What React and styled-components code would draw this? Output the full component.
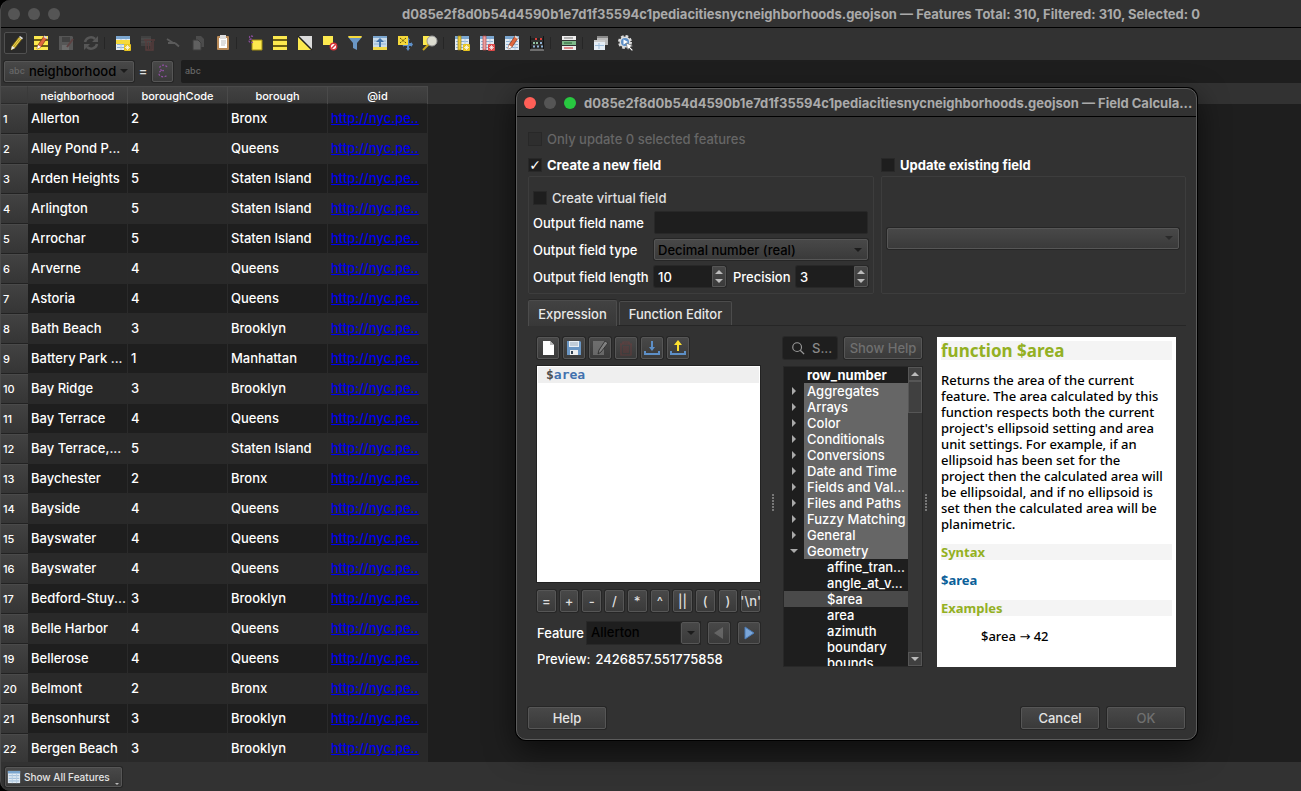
import React, { useState } from 'react'
import styled, { createGlobalStyle, css } from 'styled-components'

const UI_FONT = "Inter, 'Liberation Sans', sans-serif"
const HELP_FONT = "'Noto Sans', 'DejaVu Sans', sans-serif"
const MONO_FONT = "'DejaVu Sans Mono', 'Liberation Mono', monospace"

const GlobalStyle = createGlobalStyle`
    * {
        box-sizing: border-box;
    }
    body {
        margin: 0;
        background: #000;
        color: #fff;
        font: 500 13px/16px ${UI_FONT};
        overflow: hidden;
    }
    button,
    input,
    select {
        font: inherit;
        color: inherit;
        margin: 0;
    }
    svg {
        flex: none;
    }
`

const raised = css`
    border: 1px solid #565656;
    border-radius: 2px;
    background: linear-gradient(#484848, #3a3a3a);
    box-shadow: 0 0 0 1px #262626;
`

const Window = styled.div`
    height: 100vh;
    display: flex;
    flex-direction: column;
    background: #323232;
    border-left: 1px solid #4a4a4a;
    border-radius: 10px 0 0 10px;
    overflow: hidden;
`

const TitleBar = styled.header`
    display: flex;
    align-items: center;
    flex: none;
    height: 28px;
    padding: 0 ${(props) => (props.$dialog ? 8 : 101)}px 0 7px;
    border-bottom: 1px solid #000;
`

const Lights = styled.div`
    display: flex;
    gap: 8px;
`

const Light = styled.span`
    width: 12px;
    height: 12px;
    border-radius: 50%;
    background: ${(props) => props.color};
`

const Title = styled.h1`
    flex: 1;
    margin: 0 0 0 8px;
    font-size: 13px;
    font-weight: 700;
    line-height: 16px;
    color: #aaa;
    text-align: ${(props) => (props.$dialog ? 'left' : 'right')};
    white-space: nowrap;
`

const Toolbar = styled.div`
    display: flex;
    align-items: center;
    gap: 2px;
    flex: none;
    height: 29px;
    padding: 0 3px;
`

const ToolButton = styled.button`
    display: flex;
    align-items: center;
    justify-content: center;
    width: 23px;
    height: 22px;
    padding: 0;
    border: 1px solid ${(props) => (props.$pressed ? '#505050' : 'transparent')};
    border-radius: 2px;
    background: ${(props) => (props.$pressed ? '#2a2a2a' : 'none')};

    &:disabled svg {
        opacity: 0.3;
    }
`

const Separator = styled.span`
    width: 5px;
    height: 12px;
    border-left: 1px solid #262626;
`

const FilterBar = styled.div`
    display: flex;
    align-items: center;
    flex: none;
    height: 29px;
    padding: 0 0 1px 3px;
`

const FieldCombo = styled.label`
    ${raised}
    display: flex;
    align-items: center;
    width: 130px;
    height: 21px;
    padding: 0 5px 0 4px;
`

const Abc = styled.span`
    font-size: 9px;
    color: #686868;
`

const PlainSelect = styled.select`
    appearance: none;
    flex: 1;
    min-width: 0;
    height: 19px;
    padding: 0 0 0 ${(props) => props.$indent || 4}px;
    border: 0;
    background: none;
    color: #000;
    opacity: 1;
`

const Equals = styled.span`
    width: 18px;
    text-align: center;
    color: #e0e0e0;
`

const EpsilonButton = styled.button`
    ${raised}
    display: flex;
    align-items: center;
    justify-content: center;
    width: 21px;
    height: 21px;
    padding: 0;
`

const ExpressionBox = styled.label`
    display: flex;
    align-items: center;
    flex: 1;
    height: 23px;
    margin-left: 8px;
    padding-left: 4px;
    border-radius: 2px 0 0 2px;
    background: #1e1e1e;

    input {
        flex: 1;
        border: 0;
        background: none;
    }
`

const TableArea = styled.main`
    flex: 1;
    min-height: 0;
    overflow: hidden;
    background: linear-gradient(#323232 18px, #1e1e1e 18px);
`

const Table = styled.table`
    width: 427px;
    table-layout: fixed;
    border-collapse: separate;
    border-spacing: 0;
`

const HeadCell = styled.th`
    width: ${(props) => (props.$index ? 27 : 100)}px;
    height: 18px;
    padding: 0;
    border-top: 1px solid #4a4a4a;
    border-right: 1px solid ${(props) => (props.$index ? '#3a3a3a' : '#4a4a4a')};
    background: linear-gradient(#424242, #383838);
    box-shadow: inset 0 -1px #2a2a2a;
    font-size: 11px;
    font-weight: 500;
`

const RowHead = styled.th`
    height: 30px;
    padding: 0 0 0 2px;
    border-top: 1px solid #4a4a4a;
    border-bottom: 1px solid #222;
    background: linear-gradient(#424242, #353535);
    text-align: left;
    font-size: 11px;
    font-weight: 500;
`

const Cell = styled.td`
    height: 30px;
    padding: 0 0 1px 3px;
    border-right: 1px solid #2a2a2a;
    border-bottom: 1px solid #292929;
    white-space: nowrap;
    overflow: hidden;

    tr:nth-child(even) > & {
        background: #292929;
    }

    a {
        color: #0000ee;
    }
`

const StatusBar = styled.footer`
    display: flex;
    align-items: center;
    flex: none;
    height: 29px;
    padding-left: 4px;
`

const ShowAllButton = styled.button`
    ${raised}
    display: flex;
    align-items: center;
    gap: 3px;
    width: 117px;
    height: 20px;
    padding: 0 2px 0 1px;
    color: #e4e4e4;
    font-size: 10px;
    white-space: nowrap;
`

const MenuMark = styled.span`
    align-self: flex-end;
    margin-left: auto;
    margin-bottom: 1px;
    border: 2px solid transparent;
    border-top-color: #bbb;
    border-bottom: 0;
`

const Arrow = styled.span`
    flex: none;
    width: 0;
    height: 0;
    border: 4px solid transparent;
    ${(props) =>
        props.$dir === 'up' &&
        `border-bottom-color: ${props.color}; border-top: 0;`}
    ${(props) =>
        props.$dir === 'down' &&
        `border-top-color: ${props.color}; border-bottom: 0;`}
    ${(props) =>
        props.$dir === 'right' &&
        `border-left-color: ${props.color}; border-right: 0;`}
`

// the calculator floats over the attribute table
const Dialog = styled.section`
    position: absolute;
    top: 88px;
    left: 516px;
    right: 104px;
    background: #323232;
    border: 1px solid #5c5c5c;
    border-radius: 10px;
    box-shadow: 0 0 0 1px #000, 0 10px 30px rgba(0, 0, 0, 0.6);
`

const DialogBody = styled.form`
    display: flex;
    flex-direction: column;
    padding: 13px 10px 10px 11px;
`

const CheckLabel = styled.label`
    display: flex;
    align-items: center;
    gap: 5px;
    height: 18px;
    color: ${(props) => props.color || '#fff'};
    font-weight: ${(props) => (props.$bold ? 700 : 500)};
`

const CheckBox = styled.input`
    appearance: none;
    display: flex;
    align-items: center;
    justify-content: center;
    width: 14px;
    height: 14px;
    background: #1e1e1e;
    border: 1px solid #282828;

    &:disabled {
        background: #2e2e2e;
    }
    &:checked::after {
        content: '✓';
        font: 14px/12px 'DejaVu Sans', sans-serif;
    }
`

const Groups = styled.div`
    display: grid;
    grid-template-columns: 346fr 305fr;
    gap: 7px;
    margin-top: 8px;
`

const Group = styled.fieldset`
    display: flex;
    flex-direction: column;
    min-width: 0;
    margin: 0;
    padding: 0;
    border: 0;
`

const GroupBox = styled.div`
    display: flex;
    flex-direction: column;
    justify-content: ${(props) => (props.$center ? 'center' : 'flex-start')};
    gap: 4px;
    height: 118px;
    margin-top: 2px;
    padding: ${(props) => (props.$center ? '6px 6px 0 5px' : '12px 5px 0 4px')};
    border: 1px solid #3d3d3d;
    border-radius: 2px;
`

const FieldRow = styled.div`
    display: flex;
    align-items: center;
    height: 23px;
`

const FieldLabel = styled.label`
    width: ${(props) => props.$width}px;
    padding-left: ${(props) => props.$inset || 0}px;
    white-space: nowrap;
`

const TextInput = styled.input`
    flex: 1;
    min-width: 0;
    height: 23px;
    border: 1px solid #282828;
    border-radius: 2px;
    background: #1e1e1e;
`

const Combo = styled.div`
    ${raised}
    display: flex;
    align-items: center;
    flex: ${(props) => (props.$block ? 'none' : 1)};
    height: 21px;
    padding-right: 5px;
`

const Spin = styled.div`
    display: flex;
    flex: 1;
    min-width: 0;
    height: 21px;
    background: #1e1e1e;
    border-radius: 2px;
    box-shadow: 0 0 0 1px #282828;

    input {
        flex: 1;
        min-width: 0;
        width: 20px;
        padding: 0 0 0 4px;
        border: 0;
        background: none;
    }
`

const SpinButtons = styled.span`
    display: flex;
    flex-direction: column;
    width: 14px;
    border: 1px solid #565656;
    border-radius: 0 2px 2px 0;
    background: linear-gradient(#484848, #3a3a3a);

    button {
        display: flex;
        flex: 1;
        align-items: center;
        justify-content: center;
        padding: 0;
        border: 0;
        background: none;
    }
`

const Tabs = styled.div`
    display: flex;
    align-items: flex-end;
    gap: 2px;
    height: 26px;
    margin-top: 6px;
    border-bottom: 1px solid #262626;
`

const Tab = styled.button`
    height: ${(props) => (props.$active ? 26 : 24)}px;
    width: ${(props) => props.$width}px;
    margin-bottom: ${(props) => (props.$active ? -1 : 0)}px;
    padding: 0;
    border: 1px solid #4c4c4c;
    border-bottom: 0;
    border-radius: 2px 2px 0 0;
    background: ${(props) =>
        props.$active ? 'linear-gradient(#424242, #383838)' : '#363636'};
    box-shadow: 0 -1px 0 #262626;
    color: #e8e8e8;
`

const Pane = styled.div`
    display: grid;
    grid-template-columns: 223fr 23px 140px 14px 239fr;
    height: 330px;
    margin: 11px 10px 0 9px;
`

const Column = styled.div`
    display: flex;
    flex-direction: column;
    min-width: 0;
    min-height: 0;
`

const Grip = styled.div`
    align-self: center;
    justify-self: ${(props) => (props.$near ? 'start' : 'center')};
    margin-left: ${(props) => (props.$near ? 2 : 3)}px;
    width: 2px;
    height: 17px;
    background: repeating-linear-gradient(#777 0 2px, transparent 2px 3px);
`

const IconRow = styled.div`
    display: flex;
    gap: ${(props) => props.$gap || 4}px;
    height: 22px;
`

const IconButton = styled.button`
    ${raised}
    display: flex;
    align-items: center;
    justify-content: center;
    width: 22px;
    height: 22px;
    padding: 0;

    &:disabled svg {
        opacity: 0.4;
    }
`

const Editor = styled.div`
    flex: 1;
    min-height: 0;
    margin: 7px 0 8px;
    background: #fff;
    border: 1px solid #fff;
    box-shadow: 0 0 0 1px #222;
    outline: none;
`

const CodeLine = styled.div`
    height: 16px;
    padding-left: 8px;
    background: #efefef;
    color: #4d4d4c;
    font: 700 13px/16px ${MONO_FONT};

    span {
        color: #4271ae;
    }
`

const Operators = styled.div`
    display: grid;
    grid-template-columns: repeat(10, 1fr);
    gap: 4px;

    button {
        ${raised}
        display: flex;
        align-items: center;
        justify-content: center;
        min-width: 0;
        height: 22px;
        padding: 0;
        color: #ddd;
    }
`

const FeatureRow = styled.div`
    display: flex;
    align-items: center;
    height: 22px;
    margin-top: 10px;
`

const FeatureCombo = styled.div`
    display: flex;
    flex: 1;
    height: 22px;
    margin-right: 8px;
    background: #1e1e1e;
    box-shadow: 0 0 0 1px #282828;
`

const DropMark = styled.span`
    ${raised}
    display: flex;
    align-items: center;
    justify-content: center;
    width: 19px;
`

const Preview = styled.div`
    display: flex;
    gap: 5px;
    height: 16px;
    margin-top: 7px;
`

const SearchRow = styled.div`
    display: flex;
    gap: 7px;
    height: 22px;
`

const Search = styled.label`
    display: flex;
    align-items: center;
    gap: 7px;
    width: 54px;
    padding-left: 8px;
    border-radius: 2px;
    background: #1e1e1e;
    box-shadow: 0 0 0 1px #282828;

    input {
        width: 22px;
        padding: 0;
        border: 0;
        background: none;
    }
    input::placeholder {
        color: #8a8a8a;
    }
`

const PushButton = styled.button`
    ${raised}
    width: 78px;
    height: 22px;
    padding: 0;
    color: #e4e4e4;
    white-space: nowrap;

    &:disabled {
        color: #707070;
    }
`

const TreeFrame = styled.div`
    display: flex;
    flex: 1;
    min-height: 0;
    margin-top: 7px;
    border: 1px solid #282828;
    background: #1e1e1e;
`

const Tree = styled.ul`
    flex: 1;
    min-width: 0;
    margin: 0;
    padding: 0;
    overflow: hidden;
    list-style: none;
`

const Branch = styled.li`
    display: flex;
    height: 16px;
    white-space: nowrap;
    background: ${(props) => (props.$selected ? '#4a4a4a' : 'none')};
`

const Twisty = styled.span`
    display: flex;
    align-items: center;
    justify-content: center;
    width: 20px;
`

const BranchName = styled.span`
    flex: 1;
    padding-left: ${(props) => (props.$kind === 'leaf' ? 23 : 3)}px;
    background: ${(props) => (props.$kind === 'group' ? '#666' : 'none')};
    font-weight: ${(props) => (props.$kind === 'plain' ? 700 : 500)};
`

const ScrollBar = styled.div`
    display: flex;
    flex-direction: column;
    justify-content: space-between;
    width: 14px;
    background: #363636;
`

const ScrollButton = styled.button`
    display: flex;
    align-items: center;
    justify-content: center;
    height: 14px;
    padding: 0;
    border: 1px solid #565656;
    background: #404040;
`

const Thumb = styled.div`
    height: 32px;
    margin-bottom: auto;
    border: 1px solid #565656;
    background: #404040;
`

const HelpPane = styled.article`
    padding: 4px;
    overflow: hidden;
    background: #fff;
    color: #000;
    font: 500 13px/16px ${HELP_FONT};
    white-space: nowrap;

    h2,
    h3 {
        margin: 0;
        background: #f4f4f4;
        color: #93b023;
        font-weight: 700;
    }
    h2 {
        font-size: 17px;
        line-height: 19px;
    }
    h3 {
        font-size: 13px;
        line-height: 16px;
    }
    p {
        margin: 12px 0;
    }
    code {
        font: inherit;
    }
`

const Syntax = styled.p`
    color: #0a6099;
    font-weight: 700;
`

const Example = styled.p`
    padding-left: 40px;

    span {
        font-family: 'DejaVu Sans', sans-serif;
    }
`

const DialogButtons = styled.div`
    display: flex;
    gap: 8px;
    margin: 40px 1px 0 0;

    button:first-child {
        margin-right: auto;
    }
`

const Svg = ({ size = 16, children }) => (
    <svg width={size} height={size} viewBox="0 0 16 16" aria-hidden="true">
        {children}
    </svg>
)

const YellowRows = () => (
    <>
        <rect x="1" y="1" width="14" height="14" fill="#6d6014" />
        <path d="M1 1h14v3H1zM1 6h14v4H1zM1 12h14v3H1z" fill="#fce94f" />
    </>
)

const Sheet = () => (
    <>
        <rect x="1" y="1" width="14" height="14" fill="#e2ebf3" />
        <path d="M1 1h14v3H1z" fill="#7ba6cf" />
        <path
            d="M2 6.5h12M2 9.5h12M2 12.5h12"
            stroke="#8fb2d4"
        />
        <path d="M6 4v11M11 4v11" stroke="#b4cbe1" />
    </>
)

const Spark = ({ fill = '#e8c420' }) => (
    <>
        <rect x="9" y="9" width="7" height="7" rx="1" fill={fill} />
        <path
            d="M12.5 10v5M10 12.5h5M10.8 10.8l3.4 3.4M14.2 10.8l-3.4 3.4"
            stroke="#fff"
            strokeWidth=".7"
        />
    </>
)

const RedPencil = () => (
    <>
        <path
            d="M4 14l1-4 6-9 3 2-6 9z"
            fill="#e0683f"
            stroke="#7a3018"
            strokeWidth=".7"
        />
        <path d="M4 14l1-4 3 2z" fill="#fff" />
        <path d="M10.500 2l1-1.500 3 2L13.500 4z" fill="#ddd" />
    </>
)

const ICONS = {
    pencil: (
        <>
            <path
                d="M3 15l1-4 7-9 3 2-7 9z"
                fill="#e9cf4c"
                stroke="#65540c"
                strokeWidth=".8"
            />
            <path d="M5.500 12l6.500-8.500" stroke="#b79b24" />
            <path d="M3 15l1-4 3 2z" fill="#eee" />
            <path d="M11 2l1-1 3 2-1 1.500z" fill="#ddd" />
        </>
    ),
    multiEdit: (
        <>
            <YellowRows />
            <RedPencil />
        </>
    ),
    save: (
        <>
            <path d="M1 1h13l1 1v13H1z" fill="#aaa" />
            <path d="M4 2h8v5H4z" fill="#666" />
            <path d="M4 10h7v5H4z" fill="#eee" />
            <path d="M9 12l6-8" stroke="#b66" strokeWidth="2" />
        </>
    ),
    reload: (
        <>
            <path
                d="M2 7a6 6 0 0 1 10-3M14 9a6 6 0 0 1-10 3"
                fill="none"
                stroke="#aaa"
                strokeWidth="2.5"
            />
            <path d="M15 1v6H9zM1 15V9h6z" fill="#aaa" />
        </>
    ),
    addFeature: (
        <>
            <Sheet />
            <path d="M1 5h14v4H1z" fill="#f5d93b" />
            <Spark />
        </>
    ),
    deleteFeature: (
        <>
            <path d="M1 1h10v10H1z" fill="#666" />
            <path d="M1 4h10M1 7h10" stroke="#999" />
            <path
                d="M4 5h11M6 6v9h7V6M8.5 7v7M11 7v7"
                fill="none"
                stroke="#b05555"
                strokeWidth="1.4"
            />
        </>
    ),
    cut: (
        <path
            d="M2 4l7 4.500M3 8h7M10 8l4 3.500"
            fill="none"
            stroke="#bbb"
            strokeWidth="1.8"
        />
    ),
    copy: (
        <>
            <path d="M6 1h5l3 3v8H6z" fill="#888" />
            <path d="M3 5h5l3 3v7H3z" fill="#ccc" stroke="#555" />
        </>
    ),
    paste: (
        <>
            <rect x="2" y="1" width="12" height="14" rx="1" fill="#b98a58" />
            <path d="M4 3h8v10H4z" fill="#fff" />
            <path d="M6 6h5M6 8h5M6 10h4" stroke="#bbb" />
            <rect x="5" y="0" width="6" height="4" fill="#ddd" />
        </>
    ),
    selectExpr: (
        <>
            <path d="M5 5h10v10H5z" fill="#fce94f" stroke="#a08c10" />
            <path
                d="M6 1.500C3 0 1 2 4 4 0 5 3 9 6 7"
                fill="none"
                stroke="#8c4f9e"
                strokeWidth="1.3"
                strokeDasharray="2 1"
            />
        </>
    ),
    selectAll: <YellowRows />,
    invert: (
        <>
            <path d="M1 1v14h14z" fill="#fce94f" />
            <path d="M1 1h14v14z" fill="#dcdcdc" />
            <path d="M1 1l14 14" stroke="#222" strokeWidth="1.5" />
        </>
    ),
    deselect: (
        <>
            <path d="M1 1h10v9H1z" fill="#fce94f" />
            <circle
                cx="11.5"
                cy="11.5"
                r="3.2"
                fill="#fff"
                stroke="#d8333a"
                strokeWidth="1.4"
            />
            <path d="M9.500 13.500l4-4" stroke="#d8333a" strokeWidth="1.4" />
        </>
    ),
    filter: (
        <>
            <path d="M1 2h14l-5 6v7l-4-2V8z" fill="#6a96c4" />
            <path d="M1 1h14l-1 2H2z" fill="#f5d93b" />
        </>
    ),
    moveTop: (
        <>
            <rect x="1" y="1" width="14" height="14" fill="#c9dbea" />
            <path d="M1 1h14v2H1z" fill="#7ba6cf" />
            <path d="M2 6h12M2 9h12" stroke="#8fb2d4" />
            <path d="M1 12h14v3H1z" fill="#f0d84a" />
            <path d="M8 3l4 4H9v5H7V7H4z" fill="#3e6fa6" />
        </>
    ),
    panTo: (
        <>
            <path
                d="M11 2l2 3h-1v3h2V7l2 2.500L14 12v-1h-2v2h1l-2 3-2-3h1v-2H7v1L5 9.500 7 7v1h3V5H9z"
                fill="#5d8fc7"
            />
            <path d="M1 1h10v9H1z" fill="#f5d93b" />
            <path
                d="M3 3l6 5M9 3L3 8"
                stroke="#5a4c08"
                strokeDasharray="2 1"
            />
        </>
    ),
    zoomTo: (
        <>
            <path d="M1 1h8v9H1z" fill="#fce94f" />
            <path d="M7 9l-6 6" stroke="#c9a61c" strokeWidth="2" />
            <circle cx="10" cy="6" r="5" fill="#dcdcd0" stroke="#999" />
        </>
    ),
    newField: (
        <>
            <Sheet />
            <path
                d="M4 1h3v14H4z"
                fill="#e8c93c"
                stroke="#9c8218"
                strokeWidth=".7"
            />
            <Spark />
        </>
    ),
    deleteField: (
        <>
            <Sheet />
            <path
                d="M4 1h3v14H4z"
                fill="#eba0a0"
                stroke="#b04848"
                strokeWidth=".7"
            />
            <Spark fill="#dd4848" />
        </>
    ),
    organize: (
        <>
            <Sheet />
            <RedPencil />
        </>
    ),
    calculator: (
        <>
            <path
                d="M1.500 1v14M14.500 1v14M1.500 4h13M1.500 8h13M1.500 12h13"
                fill="none"
                stroke="#111"
                strokeWidth=".9"
            />
            <path d="M6 3h2v2H6zM11 3h2v2h-2z" fill="#d9403c" />
            <path d="M4 7h2v2H4zM7 7h2v2H7z" fill="#8fc0a0" />
            <path d="M11 7h2v2h-2zM4 10.500h2v2H4zM8 10.500h2v2H8zM12 10.500h2v2h-2z" fill="#8fb2d4" />
            <path d="M1 15h14" stroke="#aaa" />
        </>
    ),
    conditional: (
        <>
            <path d="M1 1h14v4H1zM1 11h14v4H1z" fill="#eee" />
            <path d="M1 6h14v4H1z" fill="#7fb98a" />
            <path d="M3 3h9" stroke="#777" />
            <path d="M3 8h8" stroke="#265f32" />
            <path d="M3 13h9" stroke="#c22" />
        </>
    ),
    dock: (
        <>
            <rect x="4" y="1" width="11" height="9" fill="#bbb" />
            <path d="M4 1h11v2H4z" fill="#888" />
            <rect x="1" y="5" width="11" height="10" fill="#e6eef6" />
            <path d="M1 5h11v2H1z" fill="#ccc" />
            <path d="M2 10.500h9M6 8v6" stroke="#9dbcda" />
        </>
    ),
    actions: (
        <>
            <circle
                cx="7"
                cy="7"
                r="5.500"
                fill="#ddd"
                stroke="#ddd"
                strokeWidth="3"
                strokeDasharray="2.5 1.8"
            />
            <circle cx="7" cy="7" r="4" fill="#5d8fc7" />
            <path d="M5.500 4.500v5L10 7z" fill="#fff" />
            <path
                d="M8 8l7 3-3 1 3 3-1 1-3-3-1 2z"
                fill="#fff"
                stroke="#333"
                strokeWidth=".4"
            />
        </>
    ),
    epsilon: (
        <path
            d="M12 4C10 1 4 2 5 5c0 2 2 2.500 4 2.500C5 7.500 4 9 4 11c1 4 7 3 8 1"
            fill="none"
            stroke="#8c4f9e"
            strokeWidth="1.3"
            strokeDasharray="2 1.5"
        />
    ),
    table: <Sheet />,
    newFile: (
        <>
            <path d="M3 1h7l4 4v10H3z" fill="#fff" />
            <path d="M10 1v4h4z" fill="#bbb" />
        </>
    ),
    disk: (
        <>
            <path d="M1 1h13l1 1v13H1z" fill="#6a96c4" />
            <path d="M3 1h10v6H3z" fill="#e8eef4" />
            <path d="M4 3h8M4 5h8" stroke="#9ab" />
            <path d="M4 10h8v5H4z" fill="#eee" />
            <path d="M5 11h2v3H5z" fill="#345" />
        </>
    ),
    editFile: (
        <>
            <path d="M1 1h11v14H1z" fill="#aaa" />
            <path d="M6 14l1-4 6-9 3 2-7 9z" fill="#ddd" stroke="#222" />
        </>
    ),
    trash: (
        <path
            d="M2 4h12M5 4V2h6v2M3 4v11h10V4M6 6v7M8 6v7M10 6v7"
            fill="none"
            stroke="#8a3a3a"
            strokeWidth="1.2"
        />
    ),
    importExpr: (
        <>
            <path d="M0 11v4h16v-4h-2v2H2v-2z" fill="#5d8fc7" />
            <path d="M7 1h2v6h2l-3 4-3-4h2z" fill="#5d8fc7" />
        </>
    ),
    exportExpr: (
        <>
            <path d="M0 11v4h16v-4h-2v2H2v-2z" fill="#5d8fc7" />
            <path d="M8 0l4 5H9v6H7V5H4z" fill="#fce02f" />
        </>
    ),
    prev: <path d="M12 2v12L3 8z" fill="#999" />,
    next: <path d="M4 2v12l9-6z" fill="#7ba6d8" stroke="#4a7ab5" />,
    search: (
        <>
            <circle
                cx="7"
                cy="7"
                r="5"
                fill="none"
                stroke="#999"
                strokeWidth="1.3"
            />
            <path d="M10.500 10.500L15 15" stroke="#999" strokeWidth="1.5" />
        </>
    ),
}

const TOOLS = [
    ['pencil', 'Toggle editing mode'],
    ['multiEdit', 'Multi edit mode'],
    ['save', 'Save edits', true],
    ['reload', 'Reload the table', true],
    null,
    ['addFeature', 'Add feature'],
    ['deleteFeature', 'Delete selected features', true],
    ['cut', 'Cut', true],
    ['copy', 'Copy', true],
    ['paste', 'Paste'],
    null,
    ['selectExpr', 'Select by expression'],
    ['selectAll', 'Select all'],
    ['invert', 'Invert selection'],
    ['deselect', 'Deselect all'],
    ['filter', 'Filter using form'],
    ['moveTop', 'Move selection to top'],
    ['panTo', 'Pan map to selection'],
    ['zoomTo', 'Zoom map to selection'],
    null,
    ['newField', 'New field'],
    ['deleteField', 'Delete field'],
    ['organize', 'Organize columns'],
    ['calculator', 'Open field calculator'],
    null,
    ['conditional', 'Conditional formatting'],
    null,
    ['dock', 'Dock attribute table'],
    ['actions', 'Actions'],
]

const EXPR_TOOLS = [
    ['newFile', 'New expression'],
    ['disk', 'Save expression'],
    ['editFile', 'Edit expression', true],
    ['trash', 'Delete expression', true],
    ['importExpr', 'Import expressions'],
    ['exportExpr', 'Export expressions'],
]

const COLUMNS = ['neighborhood', 'boroughCode', 'borough', '@id']

const BOROUGHS = {
    1: 'Manhattan',
    2: 'Bronx',
    3: 'Brooklyn',
    4: 'Queens',
    5: 'Staten Island',
}

const ROWS = [
    ['Allerton', 2],
    ['Alley Pond P...', 4],
    ['Arden Heights', 5],
    ['Arlington', 5],
    ['Arrochar', 5],
    ['Arverne', 4],
    ['Astoria', 4],
    ['Bath Beach', 3],
    ['Battery Park ...', 1],
    ['Bay Ridge', 3],
    ['Bay Terrace', 4],
    ['Bay Terrace,...', 5],
    ['Baychester', 2],
    ['Bayside', 4],
    ['Bayswater', 4],
    ['Bayswater', 4],
    ['Bedford-Stuy...', 3],
    ['Belle Harbor', 4],
    ['Bellerose', 4],
    ['Belmont', 2],
    ['Bensonhurst', 3],
    ['Bergen Beach', 3],
]

const OPERATORS = ['=', '+', '-', '/', '*', '^', '||', '(', ')', "'\\n'"]

const GROUPS = [
    'Aggregates',
    'Arrays',
    'Color',
    'Conditionals',
    'Conversions',
    'Date and Time',
    'Fields and Val...',
    'Files and Paths',
    'Fuzzy Matching',
    'General',
    'Geometry',
]

const FUNCTIONS = [
    'affine_tran...',
    'angle_at_v...',
    '$area',
    'area',
    'azimuth',
    'boundary',
    'bounds',
]

const FILE_NAME = 'd085e2f8d0b54d4590b1e7d1f35594c1pediacitiesnycneighborhoods.geojson'

const AttributeTable = () => (
    <Table>
        <thead>
            <tr>
                <HeadCell $index />
                {COLUMNS.map((name) => (
                    <HeadCell key={name}>{name}</HeadCell>
                ))}
            </tr>
        </thead>
        <tbody>
            {ROWS.map(([name, code], i) => (
                <tr key={i}>
                    <RowHead>{i + 1}</RowHead>
                    <Cell>{name}</Cell>
                    <Cell>{code}</Cell>
                    <Cell>{BOROUGHS[code]}</Cell>
                    <Cell>
                        <a href="#feature">http://nyc.pe..</a>
                    </Cell>
                </tr>
            ))}
        </tbody>
    </Table>
)

const SpinBox = ({ id, initial }) => {
    const [value, setValue] = useState(initial)
    return (
        <Spin>
            <input
                id={id}
                value={value}
                onChange={(e) => setValue(Number(e.target.value) || 0)}
            />
            <SpinButtons>
                <button
                    type="button"
                    aria-label="Increase"
                    onClick={() => setValue(value + 1)}
                >
                    <Arrow $dir="up" color="#bbb" />
                </button>
                <button
                    type="button"
                    aria-label="Decrease"
                    onClick={() => setValue(value - 1)}
                >
                    <Arrow $dir="down" color="#bbb" />
                </button>
            </SpinButtons>
        </Spin>
    )
}

const FieldGroups = () => (
    <Groups>
        <Group>
            <CheckLabel $bold>
                <CheckBox type="checkbox" defaultChecked />
                Create a new field
            </CheckLabel>
            <GroupBox>
                <CheckLabel color="#e0e0e0">
                    <CheckBox type="checkbox" />
                    Create virtual field
                </CheckLabel>
                <FieldRow>
                    <FieldLabel $width={121} htmlFor="name">
                        Output field name
                    </FieldLabel>
                    <TextInput id="name" />
                </FieldRow>
                <FieldRow>
                    <FieldLabel $width={121} htmlFor="type">
                        Output field type
                    </FieldLabel>
                    <Combo>
                        <PlainSelect id="type" $indent={3}>
                            <option>Decimal number (real)</option>
                        </PlainSelect>
                        <Arrow $dir="down" color="#1c1c1c" />
                    </Combo>
                </FieldRow>
                <FieldRow>
                    <FieldLabel $width={121} htmlFor="length">
                        Output field length
                    </FieldLabel>
                    <SpinBox id="length" initial={10} />
                    <FieldLabel $width={70} $inset={7} htmlFor="precision">
                        Precision
                    </FieldLabel>
                    <SpinBox id="precision" initial={3} />
                </FieldRow>
            </GroupBox>
        </Group>
        <Group>
            <CheckLabel $bold>
                <CheckBox type="checkbox" />
                Update existing field
            </CheckLabel>
            <GroupBox $center>
                <Combo $block>
                    <PlainSelect aria-label="Existing field" disabled />
                    <Arrow $dir="down" color="#2a2a2a" />
                </Combo>
            </GroupBox>
        </Group>
    </Groups>
)

const ExpressionColumn = () => (
    <Column>
        <IconRow>
            {EXPR_TOOLS.map(([icon, label, disabled]) => (
                <IconButton
                    key={icon}
                    type="button"
                    aria-label={label}
                    disabled={disabled}
                >
                    <Svg>{ICONS[icon]}</Svg>
                </IconButton>
            ))}
        </IconRow>
        <Editor
            role="textbox"
            aria-label="Expression"
            contentEditable
            suppressContentEditableWarning
            spellCheck={false}
        >
            <CodeLine>
                $<span>area</span>
            </CodeLine>
        </Editor>
        <Operators>
            {OPERATORS.map((op) => (
                <button key={op} type="button">
                    {op}
                </button>
            ))}
        </Operators>
        <FeatureRow>
            <FieldLabel $width={50} htmlFor="feature">
                Feature
            </FieldLabel>
            <FeatureCombo>
                <PlainSelect id="feature">
                    <option>Allerton</option>
                </PlainSelect>
                <DropMark>
                    <Arrow $dir="down" color="#1c1c1c" />
                </DropMark>
            </FeatureCombo>
            <IconRow $gap={8}>
                <IconButton type="button" aria-label="Previous" disabled>
                    <Svg>{ICONS.prev}</Svg>
                </IconButton>
                <IconButton type="button" aria-label="Next">
                    <Svg>{ICONS.next}</Svg>
                </IconButton>
            </IconRow>
        </FeatureRow>
        <Preview>
            <span>Preview:</span>
            <output>2426857.551775858</output>
        </Preview>
    </Column>
)

const FunctionTree = () => (
    <Column>
        <SearchRow>
            <Search>
                <Svg size={14}>{ICONS.search}</Svg>
                <input aria-label="Search functions" placeholder="S..." />
            </Search>
            <PushButton type="button" disabled>
                Show Help
            </PushButton>
        </SearchRow>
        <TreeFrame>
            <Tree>
                <Branch>
                    <Twisty />
                    <BranchName $kind="plain">row_number</BranchName>
                </Branch>
                {GROUPS.map((name) => (
                    <Branch key={name}>
                        <Twisty>
                            <Arrow
                                $dir={name === 'Geometry' ? 'down' : 'right'}
                                color="#aaa"
                            />
                        </Twisty>
                        <BranchName $kind="group">{name}</BranchName>
                    </Branch>
                ))}
                {FUNCTIONS.map((name) => (
                    <Branch key={name} $selected={name === '$area'}>
                        <Twisty />
                        <BranchName $kind="leaf">{name}</BranchName>
                    </Branch>
                ))}
            </Tree>
            <ScrollBar>
                <ScrollButton type="button" aria-label="Scroll up">
                    <Arrow $dir="up" color="#bbb" />
                </ScrollButton>
                <Thumb />
                <ScrollButton type="button" aria-label="Scroll down">
                    <Arrow $dir="down" color="#bbb" />
                </ScrollButton>
            </ScrollBar>
        </TreeFrame>
    </Column>
)

const FunctionHelp = () => (
    <HelpPane>
        <h2>function $area</h2>
        <p>
            Returns the area of the current
            <br />
            feature. The area calculated by this
            <br />
            function respects both the current
            <br />
            project's ellipsoid setting and area
            <br />
            unit settings. For example, if an
            <br />
            ellipsoid has been set for the
            <br />
            project then the calculated area will
            <br />
            be ellipsoidal, and if no ellipsoid is
            <br />
            set then the calculated area will be
            <br />
            planimetric.
        </p>
        <h3>Syntax</h3>
        <Syntax>
            <code>$area</code>
        </Syntax>
        <h3>Examples</h3>
        <Example>
            <code>
                $area <span>→</span> 42
            </code>
        </Example>
    </HelpPane>
)

const FieldCalculator = () => (
    <Dialog role="dialog" aria-label="Field Calculator">
        <TitleBar $dialog>
            <Lights>
                <Light color="#ff5f57" />
                <Light color="#555" />
                <Light color="#28c840" />
            </Lights>
            <Title as="h2" $dialog>
                {FILE_NAME} — Field Calcula...
            </Title>
        </TitleBar>
        <DialogBody onSubmit={(e) => e.preventDefault()}>
            <CheckLabel color="#666">
                <CheckBox type="checkbox" disabled />
                Only update 0 selected features
            </CheckLabel>
            <FieldGroups />
            <Tabs role="tablist">
                <Tab type="button" role="tab" $active $width={89}>
                    Expression
                </Tab>
                <Tab type="button" role="tab" $width={113}>
                    Function Editor
                </Tab>
            </Tabs>
            <Pane>
                <ExpressionColumn />
                <Grip />
                <FunctionTree />
                <Grip $near />
                <FunctionHelp />
            </Pane>
            <DialogButtons>
                <PushButton type="button">Help</PushButton>
                <PushButton type="button">Cancel</PushButton>
                <PushButton type="submit" disabled>
                    OK
                </PushButton>
            </DialogButtons>
        </DialogBody>
    </Dialog>
)

const App = () => (
    <>
        <GlobalStyle />
        <Window>
            <TitleBar>
                <Lights>
                    <Light color="#555" />
                    <Light color="#555" />
                    <Light color="#555" />
                </Lights>
                <Title>
                    {FILE_NAME} — Features Total: 310, Filtered: 310, Selected:
                    0
                </Title>
            </TitleBar>
            <Toolbar>
                {TOOLS.map((tool, i) =>
                    tool ? (
                        <ToolButton
                            key={tool[0]}
                            type="button"
                            aria-label={tool[1]}
                            disabled={tool[2]}
                            $pressed={i === 0}
                        >
                            <Svg>{ICONS[tool[0]]}</Svg>
                        </ToolButton>
                    ) : (
                        <Separator key={i} />
                    )
                )}
            </Toolbar>
            <FilterBar>
                <FieldCombo>
                    <Abc>abc</Abc>
                    <PlainSelect aria-label="Field">
                        <option>neighborhood</option>
                    </PlainSelect>
                    <Arrow $dir="down" color="#1c1c1c" />
                </FieldCombo>
                <Equals>=</Equals>
                <EpsilonButton type="button" aria-label="Expression builder">
                    <Svg>{ICONS.epsilon}</Svg>
                </EpsilonButton>
                <ExpressionBox>
                    <Abc>abc</Abc>
                    <input aria-label="Value" />
                </ExpressionBox>
            </FilterBar>
            <TableArea>
                <AttributeTable />
            </TableArea>
            <StatusBar>
                <ShowAllButton type="button">
                    <Svg size={14}>{ICONS.table}</Svg>
                    Show All Features
                    <MenuMark />
                </ShowAllButton>
            </StatusBar>
        </Window>
        <FieldCalculator />
    </>
)

export default App
